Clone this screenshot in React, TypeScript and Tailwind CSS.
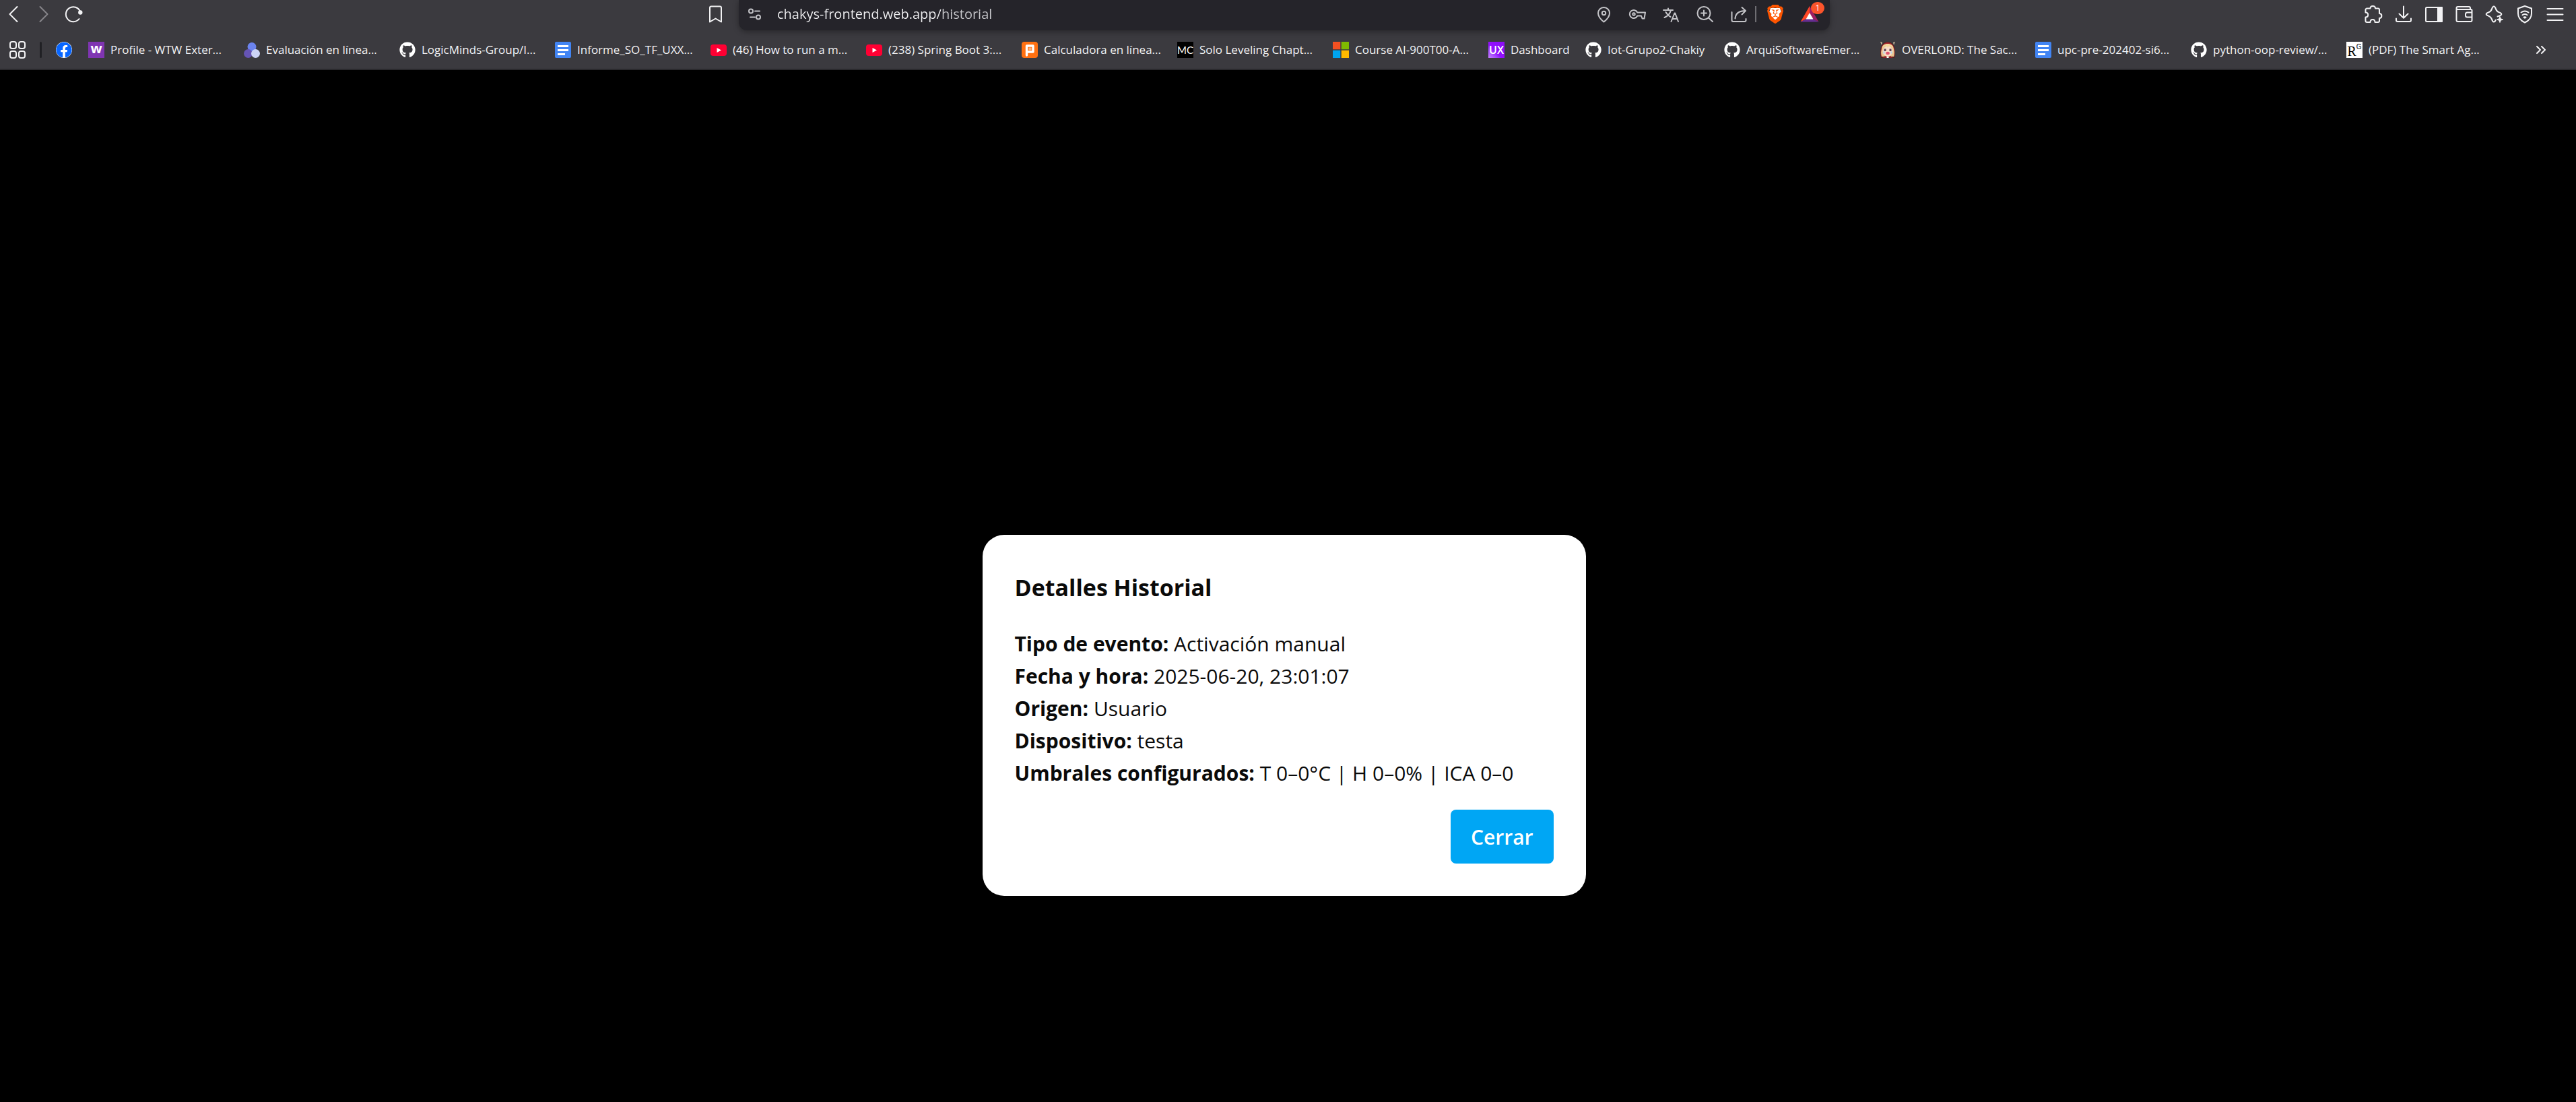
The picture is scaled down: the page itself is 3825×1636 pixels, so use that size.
import type { ReactNode } from 'react';
import { FaFacebook, FaGithub } from 'react-icons/fa';
import { SiBrave } from 'react-icons/si';

function Glyph({ children }: { children: ReactNode }) {
  return (
    <svg
      viewBox="0 0 28 28"
      className="size-7 fill-none stroke-current stroke-2"
      strokeLinecap="round"
      strokeLinejoin="round"
      aria-hidden="true"
    >
      {children}
    </svg>
  );
}

function IconButton({ label, children, className = '' }: { label: string; children: ReactNode; className?: string }) {
  return (
    <button type="button" aria-label={label} className={`relative flex size-7 shrink-0 items-center justify-center ${className}`}>
      {children}
    </button>
  );
}

const GitHubIcon = () => <FaGithub className="size-6 text-white" />;

const DocsIcon = () => (
  <svg viewBox="0 0 24 24" className="size-6">
    <rect width="24" height="24" rx="2" fill="#4285f4" />
    <path d="M4 6.5h16M4 12.5h16M4 18.5h11" stroke="#fff" strokeWidth="3" />
  </svg>
);

const YouTubeIcon = () => (
  <svg viewBox="0 0 24 24" className="size-6">
    <rect y="4" width="24" height="17" rx="4" fill="#ff0033" />
    <path d="M9.5 9v7l6.5-3.5z" fill="#fff" />
  </svg>
);

const WtwIcon = () => (
  <span className="flex size-6 items-center justify-center bg-[#7f35b2] pb-1 text-[20px] leading-5 font-bold text-white">w</span>
);

const EvaluationIcon = () => (
  <svg viewBox="0 0 24 24" className="size-6">
    <circle cx="12" cy="7.5" r="6.5" fill="#6b83ee" />
    <circle cx="6.5" cy="17.5" r="6.5" fill="#6554b4" />
    <circle cx="17.5" cy="17.5" r="6.5" fill="#ccd3f5" />
  </svg>
);

const CalculatorIcon = () => (
  <svg viewBox="0 0 24 24" className="size-6">
    <rect width="24" height="24" rx="4" fill="#ff7112" />
    <path d="M7.5 20V6h9.500v9h-9" fill="none" stroke="#fff" strokeWidth="3.4" strokeLinejoin="round" strokeLinecap="round" />
    <rect x="10.500" y="8.500" width="4" height="4" fill="#ffb683" />
  </svg>
);

const MangaIcon = () => (
  <span className="flex size-6 items-center justify-center bg-black font-['Lato',sans-serif] text-[15px] leading-6 text-white">MC</span>
);

const MicrosoftIcon = () => (
  <svg viewBox="0 0 24 24" className="size-6">
    <path d="M0 0h11.3v11.3H0z" fill="#f25022" />
    <path d="M12.7 0H24v11.3H12.7z" fill="#7fba00" />
    <path d="M0 12.7h11.3V24H0z" fill="#00a4ef" />
    <path d="M12.7 12.7H24V24H12.7z" fill="#ffb900" />
  </svg>
);

const UxIcon = () => (
  <span className="flex size-6 items-center justify-center overflow-hidden bg-linear-to-tr from-[#c77dff] via-[#9410ff] via-40% to-[#8a0cf5] text-[16px] leading-6 font-semibold text-white">
    UX
  </span>
);

const MascotIcon = () => (
  <svg viewBox="0 0 24 24" className="size-6">
    <path d="M2 24C-1 10 3 0 12 0s13 10 10 24z" fill="#4a2320" />
    <path d="M2 22C0 10 4 1 12 1s12 9 10 21z" fill="#a3242c" />
    <path d="M3 22C0 12 5 4 12 4s12 8 9 18z" fill="#e9c48f" />
    <ellipse cx="12" cy="14" rx="7.5" ry="7.5" fill="#f8dcc8" />
    <path d="M4 12C5 6 10 5 12 9c2-4 7-3 8 3 2-5-2-9-8-9s-10 4-8 9z" fill="#f3d59b" />
    <path d="M6.5 10.5h3v3.5h-3zM14.5 10.5h3v3.5h-3z" fill="#5c4256" />
    <path d="M5.5 14.500h2v3h-2zM16.5 14.500h2v3h-2z" fill="#a9d3ee" />
    <ellipse cx="12" cy="17" rx="2.8" ry="2.2" fill="#e0566f" />
    <path d="M4 24l4-3 4 2 4-2 4 3z" fill="#8e1f27" />
    <path d="M10.5 22h3v2h-3z" fill="#fff" />
    <path d="M1 0l3 1-1 4zM23 0l-3 1 1 4z" fill="#c9b99e" />
  </svg>
);

const ResearchGateIcon = () => (
  <span className="flex size-6 items-start justify-center bg-white font-['Liberation_Serif',serif] text-black">
    <span className="pt-1 text-[20px] leading-5">R</span>
    <span className="pt-0.5 font-['Liberation_Sans',sans-serif] text-[10px] leading-3">G</span>
  </span>
);

const bookmarks: { label: string; icon: ReactNode; width: string }[] = [
  { label: 'Profile - WTW Exter...', icon: <WtwIcon />, width: 'w-[231px]' },
  { label: 'Evaluación en línea...', icon: <EvaluationIcon />, width: 'w-[231px]' },
  { label: 'LogicMinds-Group/I...', icon: <GitHubIcon />, width: 'w-[231px]' },
  { label: 'Informe_SO_TF_UXX...', icon: <DocsIcon />, width: 'w-[231px]' },
  { label: '(46) How to run a m...', icon: <YouTubeIcon />, width: 'w-[231px]' },
  { label: '(238) Spring Boot 3:...', icon: <YouTubeIcon />, width: 'w-[231px]' },
  { label: 'Calculadora en línea...', icon: <CalculatorIcon />, width: 'w-[231px]' },
  { label: 'Solo Leveling Chapt...', icon: <MangaIcon />, width: 'w-[231px]' },
  { label: 'Course AI-900T00-A...', icon: <MicrosoftIcon />, width: 'w-[231px]' },
  { label: 'Dashboard', icon: <UxIcon />, width: 'w-[144px]' },
  { label: 'Iot-Grupo2-Chakiy', icon: <GitHubIcon />, width: 'w-[206px]' },
  { label: 'ArquiSoftwareEmer...', icon: <GitHubIcon />, width: 'w-[231px]' },
  { label: 'OVERLORD: The Sac...', icon: <MascotIcon />, width: 'w-[231px]' },
  { label: 'upc-pre-202402-si6...', icon: <DocsIcon />, width: 'w-[231px]' },
  { label: 'python-oop-review/...', icon: <GitHubIcon />, width: 'w-[231px]' },
  { label: '(PDF) The Smart Ag...', icon: <ResearchGateIcon />, width: 'w-[231px]' },
];

function AddressBar() {
  return (
    <div className="flex h-[45px] items-center rounded-b-xl bg-[#25242a] pr-4 pb-[3px] pl-2.5 text-[#c4c4c8] shadow-[0_2px_8px_rgba(0,0,0,0.35)]">
      <IconButton label="Información del sitio">
        <Glyph>
          <circle cx="8" cy="9.5" r="3" />
          <path d="M14 9.5h7M7 18.5h7" />
          <circle cx="19" cy="18.5" r="3" />
        </Glyph>
      </IconButton>
      <input
        aria-label="Dirección"
        defaultValue="chakys-frontend.web.app/historial"
        className="ml-[19px] min-w-0 flex-1 bg-[linear-gradient(90deg,#f0f0f2_243px,#c8c8cc_243px)] bg-clip-text text-[20px] leading-7 text-transparent outline-none"
      />
      <div className="flex items-center gap-[22px]">
        <IconButton label="Ubicación">
          <Glyph>
            <path d="M13.5 25.5C9 22 5 18 5 12.5a8.500 8.500 0 0 1 17 0C22 18 18 22 13.5 25.5z" />
            <circle cx="13.5" cy="12.5" r="2.7" />
          </Glyph>
        </IconButton>
        <IconButton label="Contraseñas">
          <Glyph>
            <path d="M13.3 11.5H25l-1.5 9h-3l-1.5-4h-5.700a6 6 0 1 1 0-5z" />
            <circle cx="8" cy="14" r="1.7" />
          </Glyph>
        </IconButton>
        <IconButton label="Traducir">
          <Glyph>
            <path d="M2 8h14M9 5.500V8M13 8c-1 5-5 9-9.500 11M5.500 11c1.500 3 4 5.500 7 7" />
            <path d="M13.500 25l5-12.500h.8L24 25M15.300 21h7.200" />
          </Glyph>
        </IconButton>
        <IconButton label="Zoom">
          <Glyph>
            <circle cx="12" cy="12.5" r="9.5" />
            <path d="M12 8.5v8M8 12.5h8M19 19.5l6 5.500" />
          </Glyph>
        </IconButton>
        <IconButton label="Compartir">
          <Glyph>
            <path d="M3.500 11v12a2 2 0 0 0 2 2h17a2 2 0 0 0 2-2v-2M8.500 20.500C9 13 14 9 24 9M18.500 4L24 9l-5.500 5.500" />
          </Glyph>
        </IconButton>
      </div>
      <div className="mr-3.5 ml-2.5 h-6 w-0.5 bg-[#6f6e73]" />
      <IconButton label="Escudos de Brave">
        <svg viewBox="0 0 28 28" className="size-7" aria-hidden="true">
          <path d="M7 5h14l2 6-3 10-6 4-6-4-3-10z" fill="#fff" />
          <SiBrave x={0} y={0} size={28} color="#ff5500" />
        </svg>
      </IconButton>
      <IconButton label="Brave Rewards" className="ml-[23px]">
        <svg viewBox="0 0 28 28" className="size-7" aria-hidden="true">
          <path d="M14 2L.5 25.5 9 21l5-8z" fill="#ff4724" />
          <path d="M14 2l13.500 23.500L19 21l-5-8z" fill="#9e1f63" />
          <path d="M.5 25.500h27L19 21H9z" fill="#662d91" />
          <path d="M14 12l5.500 9.500h-11z" fill="#fff" />
        </svg>
        <span className="absolute -top-1 left-4 flex h-[18px] w-5 items-center justify-center rounded-full bg-[#fb542b] text-[12px] leading-4 text-white">
          1
        </span>
      </IconButton>
    </div>
  );
}

function BrowserBar() {
  return (
    <header className="border-b-2 border-[#2b2a2e] bg-[#3b3a3f] text-[#f2f2f4]">
      <div className="grid grid-cols-[1fr_1620px_1fr] pr-[17px] pl-1.5">
        <div className="flex h-[42px] items-center gap-[17px] pr-5">
          <IconButton label="Atrás">
            <Glyph>
              <path d="M19.500 3L8.500 14l11 11" />
            </Glyph>
          </IconButton>
          <IconButton label="Adelante" className="text-[#86858a]">
            <Glyph>
              <path d="M8.500 3l11 11-11 11" />
            </Glyph>
          </IconButton>
          <IconButton label="Recargar">
            <Glyph>
              <path d="M21.500 21A11 11 0 1 1 23 10" />
              <circle cx="23.3" cy="11.5" r="2.2" className="fill-current" />
            </Glyph>
          </IconButton>
          <IconButton label="Añadir marcador" className="ml-auto">
            <Glyph>
              <path d="M7 2.500h13a2 2 0 0 1 2 2V25.500l-8.500-5-8.500 5V4.500a2 2 0 0 1 2-2z" />
            </Glyph>
          </IconButton>
        </div>
        <AddressBar />
        <div className="flex h-[42px] items-center justify-end gap-[17px]">
          <IconButton label="Extensiones">
            <Glyph>
              <path d="M4.500 5.500h5c0-4.700 7.500-4.700 7.500 0h4a2 2 0 0 1 2 2V13c4.500 0 4.500 7 0 7v4a2 2 0 0 1-2 2h-4.500c0-5.500-7-5.500-7 0h-5a2 2 0 0 1-2-2v-5.500c5 0 5-7 0-7v-4a2 2 0 0 1 2-2z" />
            </Glyph>
          </IconButton>
          <IconButton label="Descargas">
            <Glyph>
              <path d="M14 2.500v17M7.500 13.500l6.500 6.300 6.500-6.300M3 20.500V23a2 2 0 0 0 2 2h18a2 2 0 0 0 2-2v-2.500" />
            </Glyph>
          </IconButton>
          <IconButton label="Barra lateral">
            <Glyph>
              <rect x="2" y="4" width="24" height="21" rx="1.5" />
              <path d="M20 4h6v21h-6z" className="fill-current" />
            </Glyph>
          </IconButton>
          <IconButton label="Cartera">
            <Glyph>
              <path d="M23 7V5a2 2 0 0 0-2-2H4.500a2 2 0 0 0 0 4H24a1.500 1.500 0 0 1 1.500 1.500V23a2 2 0 0 1-2 2H4.500a2 2 0 0 1-2-2V5M25.500 11.500h-7A2.500 2.500 0 0 0 16 14v2a2.500 2.500 0 0 0 2.500 2.500h7" />
            </Glyph>
          </IconButton>
          <IconButton label="Leo IA">
            <Glyph>
              <path d="M18.500 17.500L21 16.600C23.800 15.600 24.300 15 24.300 14s-.5-1.600-3.300-2.600c-3-1.100-4-2.100-5-5C15 3.300 14.300 2.500 13 2.500S11 3.300 10 6.400c-1 2.900-2 3.900-5 5C2.200 12.400 1.700 13 1.700 14s.5 1.600 3.300 2.600c3 1.100 4 2.100 5 5 1 3.100 1.700 3.900 3 3.900s1.900-.7 2.600-2.600" />
              <path d="M22 17.500l1.200 3.300 3.300 1.200-3.300 1.200L22 26.500l-1.200-3.300-3.300-1.200 3.300-1.200z" className="fill-current stroke-1" />
            </Glyph>
          </IconButton>
          <IconButton label="VPN">
            <Glyph>
              <path d="M14 2l10 3.500V13c0 7-4.500 11-10 13.500C8.500 24 4 20 4 13V5.500zM8.500 11.500q5.500-4 11 0M10.500 15.300q3.500-2.500 7 0" />
              <path d="M12.500 18.700q1.500-1 3 0l-1.500 1z" className="fill-current" />
            </Glyph>
          </IconButton>
          <IconButton label="Menú">
            <Glyph>
              <path d="M2.500 6h23M2.500 14.500h23M2.500 23h23" />
            </Glyph>
          </IconButton>
        </div>
      </div>

      <nav aria-label="Marcadores" className="flex h-[57px] items-center pr-[45px] pl-3">
        <IconButton label="Aplicaciones">
          <Glyph>
            <rect x="3" y="2" width="9" height="10" rx="3" />
            <rect x="16" y="2" width="9" height="10" rx="3" />
            <rect x="3" y="16" width="9" height="10" rx="3" />
            <rect x="16" y="16" width="9" height="10" rx="3" />
          </Glyph>
        </IconButton>
        <div className="mr-[21px] ml-[19px] h-6 w-[3px] rounded-full bg-[#202024]" />
        <a href="#facebook" aria-label="Facebook" className="mr-6 shrink-0">
          <FaFacebook className="size-6 rounded-full bg-white text-[#0866ff]" />
        </a>
        {bookmarks.map(({ label, icon, width }) => (
          <a key={label} href="#marcador" className={`flex shrink-0 items-center gap-[9px] text-[17px] leading-6 whitespace-nowrap ${width}`}>
            <span className="size-6 shrink-0" aria-hidden="true">
              {icon}
            </span>
            <span>{label}</span>
          </a>
        ))}
        <button type="button" aria-label="Más marcadores" className="ml-auto">
          <svg viewBox="0 0 14 14" className="size-3.5 fill-none stroke-current stroke-2" strokeLinecap="round" strokeLinejoin="round">
            <path d="M1 2l5 5-5 5M8 2l5 5-5 5" />
          </svg>
        </button>
      </nav>
    </header>
  );
}

const details = [
  { name: 'Tipo de evento:', value: 'Activación manual' },
  { name: 'Fecha y hora:', value: '2025-06-20, 23:01:07' },
  { name: 'Origen:', value: 'Usuario' },
  { name: 'Dispositivo:', value: 'testa' },
  { name: 'Umbrales configurados:', value: 'T 0–0°C | H 0–0% | ICA 0–0' },
];

export default function App() {
  return (
    <div className="flex min-h-screen flex-col bg-black font-['Open_Sans','Noto_Sans',sans-serif]">
      <BrowserBar />
      <main className="flex flex-1 items-start justify-center pt-[690px] pr-3">
        <section
          role="dialog"
          aria-labelledby="dialog-title"
          className="w-full max-w-4xl rounded-[32px] bg-white px-12 pt-[50px] pb-[46px] text-[30px] leading-[48px] text-[#0a0a0a]"
        >
          <h2 id="dialog-title" className="mb-8 text-[34px] leading-[56px] font-bold">
            Detalles Historial
          </h2>
          {details.map(({ name, value }) => (
            <p key={name}>
              <strong>{name}</strong> {value}
            </p>
          ))}
          <div className="mt-[30px] flex justify-end">
            <button type="button" className="mb-0.5 rounded-lg bg-[#00a6f4] px-[30px] pt-[17px] pb-[15px] font-semibold text-white">
              Cerrar
            </button>
          </div>
        </section>
      </main>
    </div>
  );
}
